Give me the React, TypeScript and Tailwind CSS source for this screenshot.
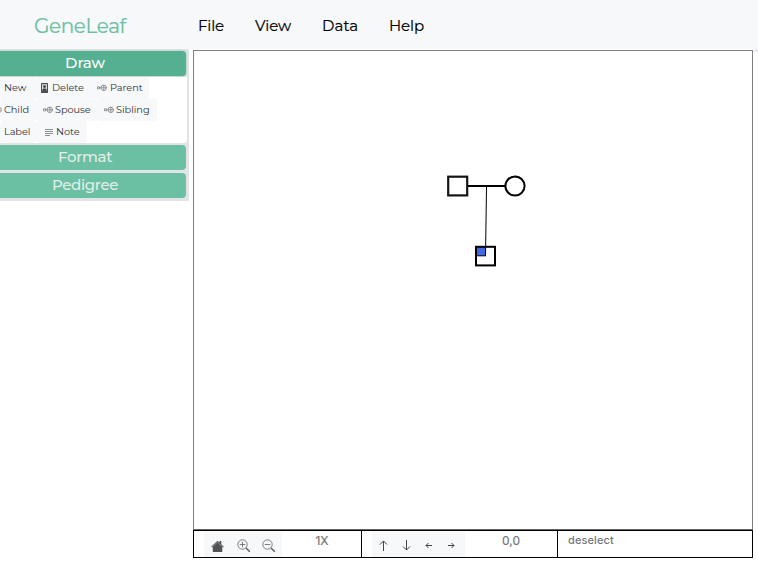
import React from 'react';

function Relation() {
  return (
    <svg width="10" height="8" viewBox="0 0 10 8" fill="none" stroke="#6d7073" strokeWidth=".7" className="shrink-0">
      <path d="M.5 2.8h2v2h-2zM2.5 3.8H10M6.8 1v5.8" />
      <circle cx="6.7" cy="3.8" r="2.7" />
    </svg>
  );
}

function DeleteIcon() {
  return (
    <svg width="7" height="10" viewBox="0 0 7 10" className="shrink-0">
      <rect width="7" height="10" rx=".7" fill="#4b4d4f" />
      <path d="M1 1.2h5v6.2H1z" fill="#d9dadc" />
      <circle cx="3.5" cy="3.6" r="1.3" fill="#333" />
      <path d="M1.2 7.4c.4-2.4 4.2-2.4 4.6 0z" fill="#333" />
    </svg>
  );
}

function NoteIcon() {
  return (
    <svg width="8" height="7" viewBox="0 0 8 7" stroke="#8b8e91" strokeWidth="1" className="shrink-0">
      <path d="M0 .5h8M0 2.5h8M0 4.5h8M0 6.5h5" />
    </svg>
  );
}

function Tool({ label, icon, box, text }: { label: string; icon?: React.ReactNode; box: string; text: string }) {
  return (
    <button className={`flex h-[22px] shrink-0 items-center rounded-[3px] bg-[#f7f8fa] text-[#303335] ${box}`}>
      {icon}
      <span className={`whitespace-nowrap text-[9.8px] leading-[22px] ${text}`}>{label}</span>
    </button>
  );
}

function Magnifier({ plus }: { plus?: boolean }) {
  return (
    <svg width="14" height="14" viewBox="0 0 14 14" fill="none" stroke="#5c5f62" strokeWidth=".8">
      <circle cx="5.5" cy="5.5" r="4.7" />
      <path d={plus ? 'M2.7 5.5h5.6M5.5 2.7v5.6' : 'M2.7 5.5h5.6'} />
      <path d="M9 9l3.8 3.8" strokeWidth="1.5" />
    </svg>
  );
}

function Arrow({ d, w, h }: { d: string; w: number; h: number }) {
  return (
    <svg width={w} height={h} viewBox={`0 0 ${w} ${h}`} fill="none" stroke="#414446" strokeWidth="1">
      <path d={d} />
    </svg>
  );
}

export default function App() {
  return (
    <div className="h-[563px] w-[758px] overflow-hidden bg-white font-[Montserrat,Inter,sans-serif]">
      <header className="flex h-[49px] items-center bg-[#f7f8fa] pt-[3px]">
        <div className="w-[164px] shrink-0 pl-[34px] text-[20px] leading-[28px] tracking-[-0.4px] text-[#6bbfa3] [-webkit-text-stroke:0.2px_#6bbfa3]">GeneLeaf</div>
        <nav className="flex pl-[34px] text-[15px] leading-6 text-black [-webkit-text-stroke:0.2px_black]">
          <span className="w-[57px] tracking-[-0.2px]">File</span>
          <span className="w-[67px] tracking-[-0.05px]">View</span>
          <span className="w-[67px] tracking-[0.1px]">Data</span>
          <span className="tracking-[-0.1px]">Help</span>
        </nav>
      </header>
      <main className="flex">
        <aside className="mr-[4px] h-[152px] w-[189px] shrink-0 bg-[#e1e3e6] pt-[2px]">
          <button className="flex h-[25px] w-[186px] items-center justify-center rounded-r-[4px] bg-[#55b091] pb-[2px] pr-[16px] text-[15px] font-medium leading-[23px] tracking-[-0.1px] text-white shadow-[0_0_2px_#79bea6]">
            <span className="block">Draw</span>
          </button>
          <section className="mt-[1px] h-[66px] w-[187px] rounded-br-[3px] bg-white">
            <div className="flex">
              <Tool label="New" box="w-[36px] pl-[4px]" text="tracking-[-0.05px]" />
              <Tool label="Delete" icon={<DeleteIcon />} box="w-[54px] gap-[4px] pl-[5px]" text="tracking-[-0.05px]" />
              <Tool label="Parent" icon={<Relation />} box="w-[59px] gap-[3px] pl-[7px]" text="tracking-[-0.05px]" />
            </div>
            <div className="flex">
              <Tool label="Child" icon={<svg width="3" height="8" viewBox="0 0 3 8" className="mr-[1px]"><path d="M0 1.3c1.5 .4 1.5 4.8 0 5.2" fill="none" stroke="#626568" strokeWidth=".8" /></svg>} box="w-[36px]" text="tracking-[-0.1px]" />
              <Tool label="Spouse" icon={<Relation />} box="w-[61px] gap-[2px] pl-[7px]" text="tracking-[-0.1px]" />
              <Tool label="Sibling" icon={<Relation />} box="w-[60px] gap-[2px] pl-[7px]" text="tracking-[-0.05px]" />
            </div>
            <div className="flex">
              <Tool label="Label" box="w-[36px] pl-[4px]" text="tracking-[-0.1px]" />
              <Tool label="Note" icon={<NoteIcon />} box="w-[51px] gap-[3px] pl-[9px]" text="tracking-[-0.05px]" />
            </div>
          </section>
          <button className="mt-[2px] flex h-[25px] w-[186px] items-center justify-center rounded-r-[4px] bg-[#6bbfa3] pb-[2px] pr-[16px] text-[15px] font-medium leading-[23px] tracking-[-0.3px] text-[#e3eeea]">Format</button>
          <button className="mt-[3px] flex h-[25px] w-[186px] items-center justify-center rounded-r-[4px] bg-[#6bbfa3] pb-[2px] pr-[16px] text-[15px] font-medium leading-[23px] tracking-[-0.35px] text-[#e3eeea]">Pedigree</button>
        </aside>
        <section className="w-[560px] shrink-0 pt-px">
          <div className="h-[480px] border border-[#7d7f81] border-b-[#666]">
            <svg width="558" height="478" viewBox="194 51 558 478" fill="none" stroke="#000">
              <path d="M468 186h37" strokeWidth="2" />
              <rect x="448.2" y="176.7" width="19" height="18.7" fill="white" strokeWidth="2.2" stroke="#151515" />
              <circle cx="515" cy="186" r="9.6" fill="white" strokeWidth="2" />
              <rect x="476" y="246.8" width="19" height="18.6" fill="white" strokeWidth="2" />
              <rect x="476.5" y="247.3" width="9" height="8.5" fill="#4169e1" strokeWidth="1" />
              <path d="M486.5 187l-1 69" strokeWidth="1" />
            </svg>
          </div>
          <footer className="flex h-[28px] border border-black font-[Inter,sans-serif] text-[12px] text-[#75777a]">
            <div className="flex h-[26px] w-[168px] border-r border-black pl-[10px]">
              <div className="mt-[1px] flex h-[25px] w-[78px] items-center bg-[#f7f8fa] pl-[7px] pt-[3px]">
                <svg width="13" height="12" viewBox="0 0 13 12" className="mr-[13px]" fill="#505254"><path d="M.2 6.8 6.5.8l2 1.8V1h1.8v3.3l2.5 2.5-.7.7-.8-.7V12H1.8V6.8l-.9.7z" /><path d="M1.3 7 6.5 2.2 11.7 7" fill="none" stroke="#b5b7b9" strokeWidth=".6" /></svg>
                <Magnifier plus />
                <span className="w-[11px]" />
                <Magnifier />
              </div>
              <span className="flex-1 pl-px text-center leading-[20px] [-webkit-text-stroke:0.2px_#75777a]">1X</span>
            </div>
            <div className="flex h-[26px] w-[196px] border-r border-black pl-[10px]">
              <div className="mt-[1px] flex h-[25px] w-[93px] items-center bg-[#f7f8fa] pl-[7px] pt-[2px]">
                <Arrow w={9} h={11} d="M4.5 11V1M1 4.5 4.5 1 8 4.5" />
                <span className="w-[14px]" />
                <Arrow w={9} h={11} d="M4.5 0v10M1 6.5 4.5 10 8 6.5" />
                <span className="w-[14px]" />
                <Arrow w={7} h={7} d="M7 3.5H1M3.5 1 1 3.5 3.5 6" />
                <span className="w-[16px]" />
                <Arrow w={7} h={7} d="M0 3.5h6M3.5 1 6 3.5 3.5 6" />
              </div>
              <span className="flex-1 text-center leading-[20px] [-webkit-text-stroke:0.2px_#75777a]">0,0</span>
            </div>
            <div className="pl-[10px] text-[11px] font-medium leading-[18px] tracking-[0.1px]">deselect</div>
          </footer>
        </section>
        <div className="ml-[1px] h-[3px] flex-1 bg-[#ebecef]" />
      </main>
    </div>
  );
}
